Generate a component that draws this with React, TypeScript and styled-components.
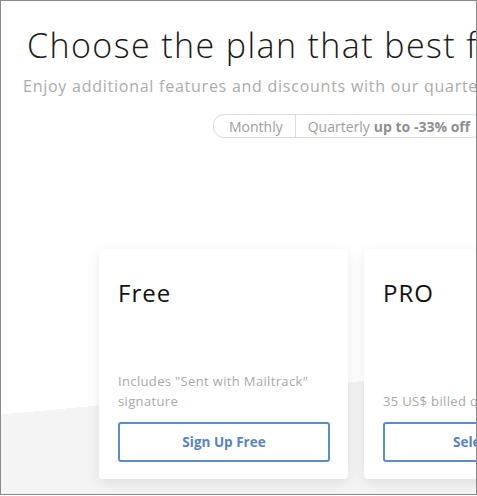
import React from 'react';
import styled, { createGlobalStyle } from 'styled-components';

const GlobalStyle = createGlobalStyle`
    html, body {
        margin: 0;
        padding: 0;
        background: #ffffff;
    }
`;

const Frame = styled.div`
    box-sizing: border-box;
    width: 477px;
    height: 495px;
    border: 1px solid #8a8a8a;
    overflow: hidden;
    background: linear-gradient(174.7deg, #ffffff 0 77%, #f4f4f4 77%);
`;

const Header = styled.div`
    display: flex;
    flex-direction: column;
    padding-top: 23px;
    white-space: nowrap;
`;

const Title = styled.h1`
    margin: 0 0 0 26px;
    font-family: 'Open Sans', sans-serif;
    font-weight: 300;
    font-size: 34px;
    line-height: 42px;
    letter-spacing: 1.4px;
    color: #1a1a1a;
`;

const Subtitle = styled.p`
    margin: 9px 0 0 22px;
    font-family: 'Open Sans', sans-serif;
    font-size: 16px;
    line-height: 22px;
    letter-spacing: 0.75px;
    color: #ababab;
`;

const Toggle = styled.div`
    display: flex;
    align-self: flex-start;
    margin: 17px 0 0 212px;
    height: 22px;
    border: 1px solid #dcdcdc;
    border-radius: 11px;
    font-family: 'Open Sans', sans-serif;
    font-size: 14px;
    color: #9d9d9d;
`;

const ToggleItem = styled.span<{ $first?: boolean }>`
    display: flex;
    align-items: center;
    padding: 0 12px 0 ${(p) => (p.$first ? '15px' : '12px')};
    border-left: ${(p) => (p.$first ? 'none' : '1px solid #dcdcdc')};

    b {
        margin-left: 4px;
        font-weight: 700;
        color: #8f8f8f;
    }
`;

const Cards = styled.div`
    display: flex;
    gap: 16px;
    padding: 111px 0 0 98px;
`;

const Card = styled.div`
    flex: 0 0 auto;
    box-sizing: border-box;
    width: 249px;
    height: 230px;
    padding: 30px 18px 0 19px;
    display: flex;
    flex-direction: column;
    background: #ffffff;
    border-radius: 4px;
    box-shadow: 0 4px 14px rgba(0, 0, 0, 0.09);
`;

const PlanName = styled.h2`
    margin: 0;
    font-family: 'Open Sans', sans-serif;
    font-weight: 400;
    font-size: 24px;
    line-height: 28px;
    letter-spacing: 1px;
    color: #111111;
`;

const Note = styled.p`
    margin: auto 0 0;
    font-family: 'Open Sans', sans-serif;
    font-size: 13px;
    line-height: 20px;
    letter-spacing: 0.35px;
    color: #a9a9a9;
    white-space: nowrap;
`;

const Action = styled.button`
    box-sizing: border-box;
    width: 212px;
    height: 40px;
    margin: 11px 0 17px;
    border: 2px solid #5d8ccb;
    border-radius: 3px;
    background: #ffffff;
    font-family: 'Open Sans', sans-serif;
    font-weight: 700;
    font-size: 13.5px;
    color: #5883bd;
    white-space: nowrap;
    overflow: hidden;
`;

const App = () => {
    return (
        <Frame>
            <GlobalStyle />
            <Header>
                <Title>Choose the plan that best fits you</Title>
                <Subtitle>Enjoy additional features and discounts with our quarterly plans</Subtitle>
                <Toggle>
                    <ToggleItem $first>Monthly</ToggleItem>
                    <ToggleItem>
                        Quarterly<b>up to -33% off</b>
                    </ToggleItem>
                </Toggle>
            </Header>
            <Cards>
                <Card>
                    <PlanName>Free</PlanName>
                    <Note>
                        Includes "Sent with Mailtrack"
                        <br />
                        signature
                    </Note>
                    <Action>Sign Up Free</Action>
                </Card>
                <Card>
                    <PlanName>PRO</PlanName>
                    <Note>35 US$ billed quarterly</Note>
                    <Action>Select PRO</Action>
                </Card>
            </Cards>
        </Frame>
    );
};

export default App;
